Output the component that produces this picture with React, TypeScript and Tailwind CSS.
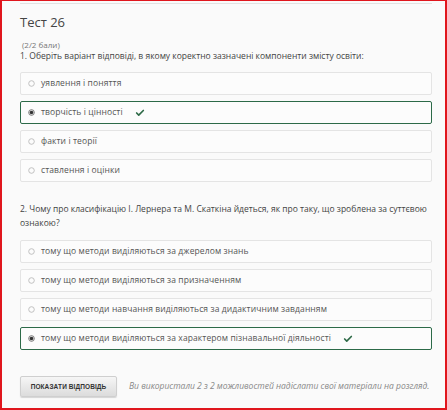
import { Check } from "lucide-react";

const font = { fontFamily: '"Open Sans", "Noto Sans", sans-serif' };

function Radio({ checked }: { checked?: boolean }) {
  return (
    <svg width="7" height="7" viewBox="0 0 7 7" className="shrink-0">
      <circle cx="3.5" cy="3.5" r="2.8" fill="none" stroke={checked ? "#666" : "#bbb"} strokeWidth="0.9" />
      {checked && <circle cx="3.5" cy="3.5" r="1.8" fill="#333" />}
    </svg>
  );
}

function Option({ text, checked }: { text: string; checked?: boolean }) {
  return (
    <div
      className={
        "h-[23px] flex items-center pl-[7px] gap-[5px] rounded-[2px] bg-[#fcfcfc] text-[8.5px] text-[#555] border " +
        (checked ? "border-[#2c6a48]" : "border-[#e4e4e4]")
      }
    >
      <Radio checked={checked} />
      <span className="ml-[1px] tracking-[0.1px]">{text}</span>
      {checked && <Check size={10} strokeWidth={4} className="ml-[7px] text-[#2e6a47]" />}
    </div>
  );
}

export default function App() {
  const q1 = ["уявлення і поняття", "творчість і цінності", "факти і теорії", "ставлення і оцінки"];
  const q2 = [
    "тому що методи виділяються за джерелом знань",
    "тому що методи виділяються за призначенням",
    "тому що методи навчання виділяються за дидактичним завданням",
    "тому що методи виділяються за характером пізнавальної діяльності",
  ];
  return (
    <div
      style={font}
      className="w-[447px] h-[410px] box-border border-[#e0161d] border-l-2 border-r-2 border-t border-b-2 bg-[#fafafa] pl-[18px] pr-[13px] overflow-hidden"
    >
      <div className="pt-[2px] border-b border-[#e2e2e2]" />
      <h1 className="mt-[9px] text-[13px] leading-[18px] text-[#444] font-normal">Тест 26</h1>
      <div className="mt-[8px] pl-[2px] text-[8px] leading-[11px] text-[#777]">(2/2 бали)</div>
      <p className="text-[8.5px] leading-[12px] text-[#444]">
        1. Оберіть варіант відповіді, в якому коректно зазначені компоненти змісту освіти:
      </p>
      <div className="mt-[10px] flex flex-col gap-[6px]">
        {q1.map((t, i) => (
          <Option key={t} text={t} checked={i === 1} />
        ))}
      </div>
      <p className="mt-[20px] text-[8.5px] leading-[14px] text-[#444]">
        2. Чому про класифікацію І. Лернера та М. Скаткіна йдеться, як про таку, що зроблена за суттєвою ознакою?
      </p>
      <div className="mt-[10px] flex flex-col gap-[6px]">
        {q2.map((t, i) => (
          <Option key={t} text={t} checked={i === 3} />
        ))}
      </div>
      <div className="mt-[26px] flex items-center gap-[12px]">
        <button
          className="w-[97px] h-[21px] rounded-[2px] border border-[#cfcfcf] bg-gradient-to-b from-[#f6f6f6] to-[#dcdcdc] shadow-[0_1px_1px_rgba(0,0,0,0.15)] text-[6.5px] font-bold text-[#333] tracking-[0.1px]"
          style={{ fontFamily: '"Liberation Sans", Arial, sans-serif' }}
        >
          ПОКАЗАТИ ВІДПОВІДЬ
        </button>
        <span className="italic text-[8.5px] text-[#888]">
          Ви використали 2 з 2 можливостей надіслати свої матеріали на розгляд.
        </span>
      </div>
    </div>
  );
}
